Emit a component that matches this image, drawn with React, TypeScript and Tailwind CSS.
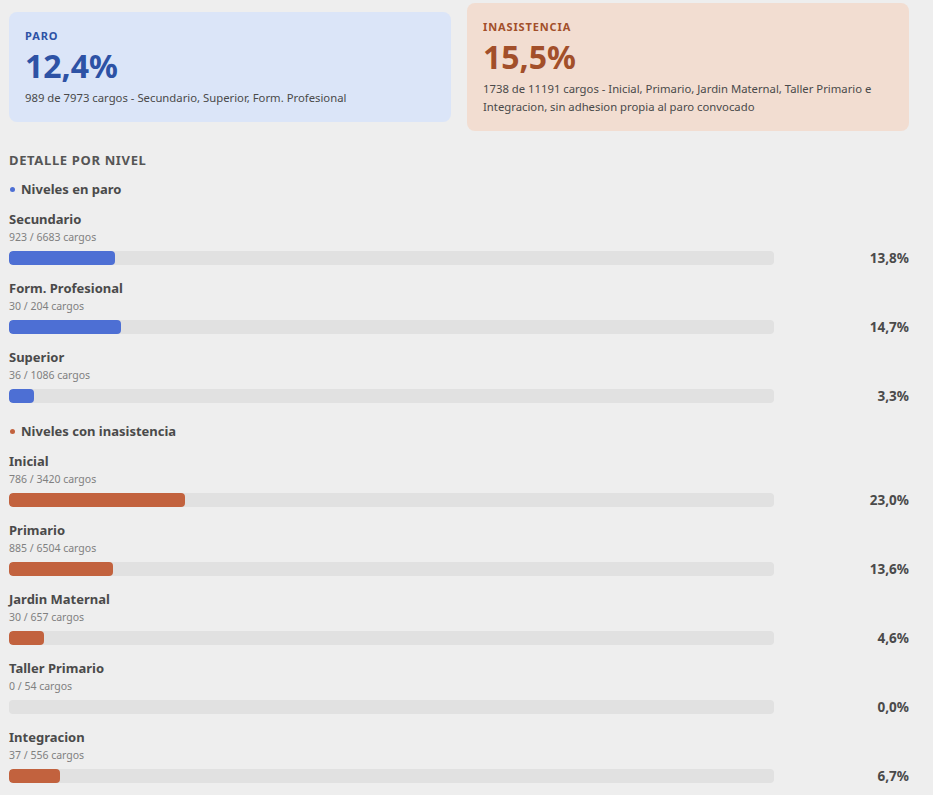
import React from "react";

type Row = { name: string; num: number; den: number; pct: string; w: number };

const paro: Row[] = [
  { name: "Secundario", num: 923, den: 6683, pct: "13,8%", w: 13.8 },
  { name: "Form. Profesional", num: 30, den: 204, pct: "14,7%", w: 14.7 },
  { name: "Superior", num: 36, den: 1086, pct: "3,3%", w: 3.3 },
];

const inas: Row[] = [
  { name: "Inicial", num: 786, den: 3420, pct: "23,0%", w: 23.0 },
  { name: "Primario", num: 885, den: 6504, pct: "13,6%", w: 13.6 },
  { name: "Jardin Maternal", num: 30, den: 657, pct: "4,6%", w: 4.6 },
  { name: "Taller Primario", num: 0, den: 54, pct: "0,0%", w: 0 },
  { name: "Integracion", num: 37, den: 556, pct: "6,7%", w: 6.7 },
];

function LevelRow({ r, color }: { r: Row; color: "blue" | "orange" }) {
  return (
    <div className="flex flex-col">
      <div className="text-[13px] leading-[18px] font-bold text-[#4a4a4a]">{r.name}</div>
      <div className="text-[10.5px] leading-[19px] text-[#808080]">
        {r.num} / {r.den} cargos
      </div>
      <div className="mt-[4px] flex items-center h-[14px]">
        <div className="flex-1 h-[14px] rounded-[4px] bg-[#e1e1e1] overflow-hidden">
          <div
            className={
              color === "blue"
                ? "h-full rounded-[4px] bg-[#4d6fd4]"
                : "h-full rounded-[4px] bg-[#c2623e]"
            }
            style={{ width: `${r.w}%` }}
          />
        </div>
        <div className="w-[135px] text-right text-[13.5px] leading-[14px] font-bold text-[#4a4a4a]">
          {r.pct}
        </div>
      </div>
    </div>
  );
}

export default function App() {
  return (
    <div
      className="min-h-screen bg-[#eeeeee] pl-[9px] pr-[24px] pt-[3px] pb-[12px]"
      style={{ fontFamily: '"Noto Sans", "Open Sans", sans-serif' }}
    >
      <div className="grid grid-cols-2 gap-4 items-center">
        <div className="rounded-lg bg-[#dbe5f8] px-4 pt-4 pb-[15px]">
          <div className="text-[11px] leading-[16px] font-bold tracking-[0.08em] text-[#2d52a5]">
            PARO
          </div>
          <div className="text-[32px] leading-[44px] font-bold text-[#2d52a5]">12,4%</div>
          <div className="mt-[1px] text-[11.3px] leading-[18px] text-[#4a4a4a]">
            989 de 7973 cargos - Secundario, Superior, Form. Profesional
          </div>
        </div>
        <div className="rounded-lg bg-[#f2ddd1] px-4 pt-4 pb-[15px]">
          <div className="text-[11px] leading-[16px] font-bold tracking-[0.08em] text-[#a24f2a]">
            INASISTENCIA
          </div>
          <div className="text-[32px] leading-[44px] font-bold text-[#a24f2a]">15,5%</div>
          <div className="mt-[1px] text-[11.3px] leading-[18px] text-[#4a4a4a]">
            1738 de 11191 cargos - Inicial, Primario, Jardin Maternal, Taller Primario e
            Integracion, sin adhesion propia al paro convocado
          </div>
        </div>
      </div>

      <div className="mt-[21px] text-[13px] leading-[16px] font-bold tracking-[0.05em] text-[#555555]">
        DETALLE POR NIVEL
      </div>

      <div className="mt-[12px] flex items-center gap-[6px] text-[13px] leading-[18px] font-bold text-[#4a4a4a]">
        <span className="ml-[1px] inline-block w-[5px] h-[5px] rounded-full bg-[#4d6fd4]" />
        Niveles en paro
      </div>
      <div className="mt-[12px] flex flex-col gap-[14px]">
        {paro.map((r) => (
          <LevelRow key={r.name} r={r} color="blue" />
        ))}
      </div>

      <div className="mt-[19px] flex items-center gap-[6px] text-[13px] leading-[18px] font-bold text-[#4a4a4a]">
        <span className="ml-[1px] inline-block w-[5px] h-[5px] rounded-full bg-[#c2623e]" />
        Niveles con inasistencia
      </div>
      <div className="mt-[12px] flex flex-col gap-[14px]">
        {inas.map((r) => (
          <LevelRow key={r.name} r={r} color="orange" />
        ))}
      </div>
    </div>
  );
}
